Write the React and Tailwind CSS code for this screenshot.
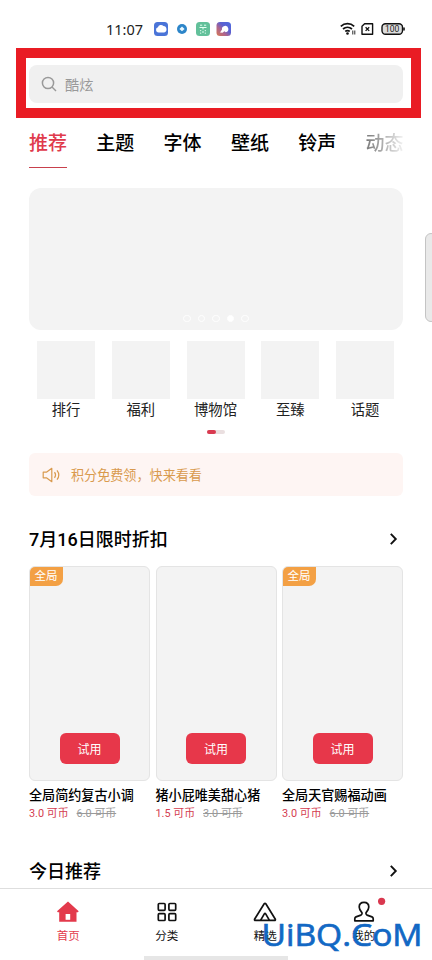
import React from 'react';

const tabs = ['推荐', '主题', '字体', '壁纸', '铃声'];
const shortcuts = ['排行', '福利', '博物馆', '至臻', '话题'];
const themes = [
  { name: '全局简约复古小调', price: '3.0 可币', oldPrice: '6.0 可币', tag: '全局' },
  { name: '猪小屁唯美甜心猪', price: '1.5 可币', oldPrice: '3.0 可币' },
  { name: '全局天官赐福动画', price: '3.0 可币', oldPrice: '6.0 可币', tag: '全局' },
];

const StatusBar = () => (
  <div className="flex h-12 items-start justify-between pl-[106px] pr-[27px] pt-[20px]">
    <div className="flex h-[18px] items-center">
      <span className="w-[48px] whitespace-nowrap font-['Noto_Sans'] text-[14.5px] leading-[18px] text-[#222]">11:07</span>
      <svg className="block" width="78" height="16" viewBox="0 0 78 16">
        <rect x="0" y="1" width="14" height="14" rx="3.5" fill="#4a74d8" />
        <path d="M4.6 11.4a2.6 2.6 0 0 1-.7-5.1 3.2 3.2 0 0 1 5.5-1.2 3.2 3.2 0 0 1 .7 6.3z" fill="#fff" />
        <circle cx="28" cy="8" r="5" fill="#2c85c9" />
        <path d="M28 5.6 30.6 8 28 10.2 25.4 8z" fill="#e8f8ff" />
        <rect x="42" y="1" width="14" height="14" rx="3.5" fill="#62c09a" />
        <path d="M46 4.2h2.2M50 4.2h2.2M45.5 6.5h7M49 6.5v2M46.7 9v1.2M51.3 9v1.2M46.7 11.6v1.2M51.3 11.6v1.2M49 10v2" stroke="#e5fff2" strokeWidth="1" fill="none" />
        <defs>
          <linearGradient id="appTile" x1="0" y1="1" x2="1" y2="0">
            <stop offset="0" stopColor="#d87850" />
            <stop offset="0.35" stopColor="#b0658c" />
            <stop offset="0.6" stopColor="#5c60d0" />
            <stop offset="1" stopColor="#4a6ae0" />
          </linearGradient>
        </defs>
        <rect x="62.5" y="1" width="14.5" height="14" rx="3.5" fill="url(#appTile)" />
        <path d="M66 11.5 68 8.6a3.2 3.2 0 1 1 3.7 2.6l-1.2-1-2 1.6z" fill="#fff" />
      </svg>
    </div>
    <svg className="block" width="65" height="18" viewBox="0 0 65 18" fill="none" stroke="#111">
      <path d="M.8 6.3a10 10 0 0 1 13.4 0M3 9a7 7 0 0 1 9 0M5.2 11.4a4 4 0 0 1 4.6 0" strokeWidth="1.7" />
      <circle cx="7.5" cy="13.5" r="1.3" fill="#111" stroke="none" />
      <path d="M12.8 10.5v4M14.8 10.5v4" strokeWidth=".9" />
      <path d="M24.6 3.8h8v10.4H22V6.3z" strokeWidth="1.4" strokeLinejoin="round" />
      <path d="m25.6 7.3 3.6 3.6m0-3.6-3.6 3.6" strokeWidth="1.3" />
      <rect x="42" y="3.7" width="20.5" height="10.6" rx="3.5" fill="#dcdcdc" strokeWidth="1.4" />
      <path d="M64 7.5v3" strokeWidth="1.6" />
      <text x="52.2" y="12.1" textAnchor="middle" fill="#222" stroke="none" className="font-['Roboto'] text-[8.5px]">100</text>
    </svg>
  </div>
);

const Chevron = () => (
  <svg className="mr-[5px] block" width="9" height="14" viewBox="0 0 9 14" fill="none" stroke="#111" strokeWidth="1.9">
    <path d="m1.8 1.8 5 5.2-5 5.2" />
  </svg>
);

const SectionTitle = ({ children }) => (
  <div className="flex h-6 items-center justify-between">
    <h2 className="whitespace-nowrap pt-[2px] text-[18px] font-medium leading-6 text-black">{children}</h2>
    <Chevron />
  </div>
);

const ThemeCard = ({ theme }) => (
  <div className="min-w-0 flex-1">
    <div className="flex h-[215px] flex-col items-start justify-between overflow-hidden rounded-[6px] border border-[#e4e4e4] bg-[#f3f3f3]">
      {theme.tag ? (
        <span className="-ml-px -mt-px flex h-5 w-[34px] items-center justify-center rounded-br-[7px] bg-[#f3a044] pt-[2px] text-[11.5px] text-white">{theme.tag}</span>
      ) : <span />}
      <button className="mb-[16px] h-[31px] w-[60px] self-center rounded-[6px] bg-[#e7374a] pt-[2px] text-[12px] text-white">试用</button>
    </div>
    <p className="mt-[6px] whitespace-nowrap text-[13.1px] font-medium leading-[18px] text-black">{theme.name}</p>
    <p className="flex gap-[8px] whitespace-nowrap text-[10.9px] leading-[18px]">
      <span className="text-[#d43c50]">{theme.price}</span>
      <span className="text-[#999] line-through">{theme.oldPrice}</span>
    </p>
  </div>
);

const NavItem = ({ label, active, children }) => (
  <div className={`flex w-[98.5px] flex-col items-center ${active ? 'text-[#e33a4c]' : 'text-[#111]'}`}>
    <svg className="block overflow-visible" width="24" height="24" viewBox="0 0 24 24" fill="none" stroke="currentColor" strokeWidth="1.7" strokeLinejoin="round">
      {children}
    </svg>
    <span className="mt-[4px] text-[11.5px] leading-[16px]">{label}</span>
  </div>
);

const BottomNav = () => (
  <nav className="relative h-[72px] border-t border-[#dedede] bg-white">
    <div className="flex pl-[19px] pt-[11px]">
      <NavItem label="首页" active>
        <path d="M12 1.5 1 11.3l.8 1h1.4v9.5h17.3v-9.5h1.4l.8-1z" fill="currentColor" stroke="none" />
        <rect x="9.6" y="14" width="4.6" height="5.8" fill="#fff" stroke="none" />
      </NavItem>
      <NavItem label="分类">
        <rect x="3.3" y="3.5" width="6.8" height="6.8" rx="1" />
        <rect x="13.9" y="3.5" width="6.8" height="6.8" rx="1" />
        <rect x="3.3" y="13.7" width="6.8" height="6.8" rx="1" />
        <rect x="13.9" y="13.7" width="6.8" height="6.8" rx="1" />
      </NavItem>
      <NavItem label="精选">
        <path d="M11.2 3.8 1.7 19c-.4.8-.1 1.4.8 1.4h18.9c.9 0 1.2-.6.8-1.4L12.8 3.8c-.5-.7-1.1-.7-1.6 0z" />
        <path d="m7.7 20.2 3.6-6.3c.4-.6 1-.6 1.4 0l3.6 6.3" />
      </NavItem>
      <NavItem label="我的">
        <path d="M12 2.4c-3 0-4.8 2-4.8 4.7 0 2.2 1.1 3.7 2.5 5.2.7.9.3 2.4-.8 2.8L4 16.9c-1 .4-1.2 1-1.2 1.9v2h18.4v-2c0-.9-.2-1.5-1.2-1.9l-4.9-1.8c-1.1-.4-1.5-1.9-.8-2.8 1.4-1.5 2.5-3 2.5-5.2 0-2.7-1.8-4.7-4.8-4.7z" />
        <circle cx="29.6" cy="1.3" r="3.6" fill="#d9384f" stroke="none" />
      </NavItem>
    </div>
    <div className="absolute bottom-0 left-[144px] h-[4px] w-[144px] bg-[#e6e6e6]" />
    <svg className="absolute left-[258px] top-[22px] block" width="174" height="48">
      <text x="3.5" y="35" textLength="161" lengthAdjust="spacingAndGlyphs" fill="#1268c4" stroke="#1268c4" strokeWidth="0.7" className="font-['Open_Sans'] text-[31px] font-medium">UiBQ.CoM</text>
    </svg>
  </nav>
);

export default function App() {
  return (
    <div className="relative flex h-[960px] w-[432px] flex-col overflow-hidden bg-white font-['Roboto','Noto_Sans_CJK_SC',sans-serif]">
      <StatusBar />
      <div className="ml-4 h-[70px] w-[405px] border-[10px] border-[#e91c24] px-[3px] pt-[7px]">
        <div className="flex h-[38px] w-[374px] items-center rounded-[8px] bg-[#f0f0f0] pl-[12px] text-[#999]">
          <svg className="block" width="16" height="16" viewBox="0 0 16 16" fill="none" stroke="currentColor" strokeWidth="1.5">
            <circle cx="7" cy="7" r="5.6" />
            <path d="m11 11 4 4" />
          </svg>
          <span className="ml-[8px] pt-[3px] text-[14.2px]">酷炫</span>
        </div>
      </div>

      <main className="flex-1 overflow-hidden px-[29px]">
        <div className="flex h-[50px] gap-[29.3px] overflow-hidden whitespace-nowrap pt-[13px] text-[19px] font-medium leading-[26px] text-black">
          {tabs.map((tab, i) => (
            <div key={tab} className={i === 0 ? 'h-[37px] w-[38px] shrink-0 border-b border-[#c8404c] text-[#e03a4c]' : 'w-[38px] shrink-0'}>{tab}</div>
          ))}
          <div className="shrink-0 bg-gradient-to-r from-[#777] to-[#f4f4f4] bg-clip-text text-transparent">动态</div>
        </div>

        {/* carousel */}
        <div className="mt-[20px] flex h-[142px] items-end justify-center gap-[7px] rounded-[12px] bg-[#f3f3f3] pb-[8px]">
          {[0, 1, 2, 3, 4].map((dot) => (
            <span key={dot} className={`size-[7.5px] rounded-full border border-white ${dot === 3 ? 'bg-white' : ''}`} />
          ))}
        </div>

        <div className="mt-[11px] flex justify-between pl-[8px] pr-[9px]">
          {shortcuts.map((label) => (
            <div key={label} className="flex w-[58px] flex-col items-center">
              <div className="size-[58px] bg-[#f3f3f3]" />
              <span className="mt-px whitespace-nowrap text-[14.3px] leading-[21px] text-[#222]">{label}</span>
            </div>
          ))}
        </div>
        <div className="mx-auto mt-[9px] flex h-[4px] w-[18px] rounded-full bg-[#eadfe0]">
          <div className="w-[9px] rounded-full bg-[#d93a50]" />
        </div>

        <div className="mt-[19px] flex h-[43px] items-center rounded-[6px] bg-[#fef5f3] pl-[13px] text-[#d99a4e]">
          <svg className="block" width="20" height="16" viewBox="0 0 20 16" fill="none" stroke="currentColor" strokeWidth="1.2" strokeLinejoin="round">
            <path d="M1.2 5.2h3.2l5.4-3.9v13.4l-5.4-3.9H1.2zM12.5 5.2a4.6 4.6 0 0 1 0 5.6M15 3.3a7.7 7.7 0 0 1 0 9.4" />
          </svg>
          <span className="ml-[9px] whitespace-nowrap pt-[2px] text-[13.1px]">积分免费领，快来看看</span>
        </div>

        <div className="mt-[31px]">
          <SectionTitle>7月16日限时折扣</SectionTitle>
        </div>
        <div className="mt-[15px] flex gap-[5.5px]">
          {themes.map((theme) => <ThemeCard key={theme.name} theme={theme} />)}
        </div>
        <div className="mt-[36px]">
          <SectionTitle>今日推荐</SectionTitle>
        </div>
      </main>

      <BottomNav />
      {/* side drawer handle */}
      <div className="absolute left-[425px] top-[233px] h-[89px] w-[12px] rounded-[6px] border border-[#c4c4c4] bg-[#e9e9e9]" />
    </div>
  );
}
